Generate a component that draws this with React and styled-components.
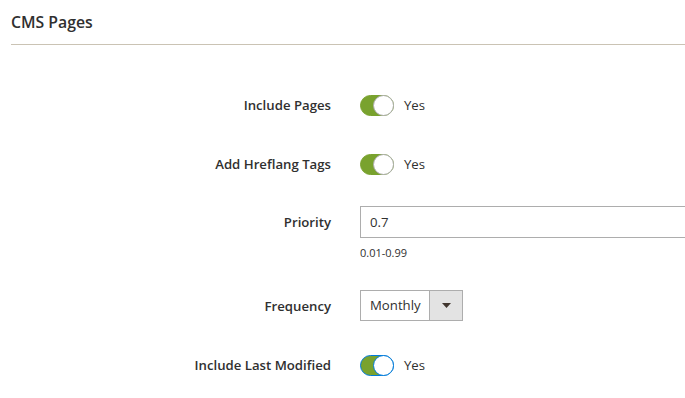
import React from "react";
import styled, { createGlobalStyle } from "styled-components";

const GlobalStyle = createGlobalStyle`
  body {
    margin: 0;
    background: #fff;
    font-family: "Open Sans", "Liberation Sans", sans-serif;
    color: #303030;
  }
`;

const Page = styled.div`
  padding: 0 0 0 11px;
  width: 685px;
  box-sizing: border-box;
  overflow: hidden;
`;

const Header = styled.div`
  border-bottom: 1px solid #cac3b4;
  padding: 11px 0 10px;
`;

const Title = styled.h2`
  margin: 0;
  font-size: 15.8px;
  font-weight: 600;
  line-height: 23px;
  color: #303030;
`;

const Form = styled.div`
  padding-top: 49px;
  display: flex;
  flex-direction: column;
`;

const Row = styled.div`
  display: grid;
  grid-template-columns: 320px 1fr;
  column-gap: 29px;
  align-items: start;
  margin-top: ${(p) => p.$gap || 0}px;
`;

const Label = styled.div`
  display: flex;
  justify-content: flex-end;
  align-items: center;
  height: ${(p) => p.$h}px;
  font-size: 13.2px;
  font-weight: 600;
  color: #303030;
  white-space: nowrap;
`;

const Control = styled.div`
  display: flex;
  flex-direction: column;
  min-width: 0;
`;

const SwitchRow = styled.div`
  display: flex;
  align-items: center;
  height: 22px;
  gap: 10px;
`;

const Track = styled.span`
  position: relative;
  display: inline-block;
  width: 34px;
  height: 21px;
  box-sizing: border-box;
  border-radius: 11px;
  background: #79a22e;
  border: 1px solid ${(p) => (p.$focus ? "#007bdb" : "#79a22e")};
`;

const Knob = styled.span`
  position: absolute;
  top: -1px;
  right: -1px;
  width: 21px;
  height: 21px;
  box-sizing: border-box;
  border-radius: 50%;
  background: #fff;
  border: 1px solid ${(p) => (p.$focus ? "#007bdb" : "#adadad")};
`;

const SwitchText = styled.span`
  font-size: 13.2px;
  color: #303030;
`;

const Input = styled.div`
  width: 420px;
  height: 32px;
  box-sizing: border-box;
  border: 1px solid #adadad;
  padding: 0 9px;
  font-size: 13.2px;
  line-height: 30px;
  color: #303030;
`;

const Note = styled.div`
  margin-top: 8px;
  font-size: 11px;
  line-height: 14px;
  color: #303030;
`;

const Select = styled.div`
  display: flex;
  width: 103px;
  height: 31px;
  box-sizing: border-box;
  border: 1px solid #adadad;
  background: #fff;
`;

const SelectValue = styled.span`
  flex: 1;
  padding-left: 9px;
  font-size: 13.2px;
  line-height: 29px;
  color: #303030;
`;

const SelectButton = styled.span`
  width: 32px;
  display: flex;
  align-items: center;
  justify-content: center;
  background: #e3e3e3;
  border-left: 1px solid #adadad;
`;

const Toggle = ({ focus }) => (
  <SwitchRow>
    <Track $focus={focus}>
      <Knob $focus={focus} />
    </Track>
    <SwitchText>Yes</SwitchText>
  </SwitchRow>
);

export default function App() {
  return (
    <>
      <GlobalStyle />
      <Page>
        <Header>
          <Title>CMS Pages</Title>
        </Header>
        <Form>
          <Row>
            <Label $h={22}>Include Pages</Label>
            <Control>
              <Toggle />
            </Control>
          </Row>
          <Row $gap={37}>
            <Label $h={22}>Add Hreflang Tags</Label>
            <Control>
              <Toggle />
            </Control>
          </Row>
          <Row $gap={31}>
            <Label $h={32}>Priority</Label>
            <Control>
              <Input>0.7</Input>
              <Note>0.01-0.99</Note>
            </Control>
          </Row>
          <Row $gap={30}>
            <Label $h={31}>Frequency</Label>
            <Control>
              <Select>
                <SelectValue>Monthly</SelectValue>
                <SelectButton>
                  <svg width="9" height="5" viewBox="0 0 9 5">
                    <path d="M0 0h9L4.5 5z" fill="#41362f" />
                  </svg>
                </SelectButton>
              </Select>
            </Control>
          </Row>
          <Row $gap={33}>
            <Label $h={22}>Include Last Modified</Label>
            <Control>
              <Toggle focus />
            </Control>
          </Row>
        </Form>
      </Page>
    </>
  );
}
